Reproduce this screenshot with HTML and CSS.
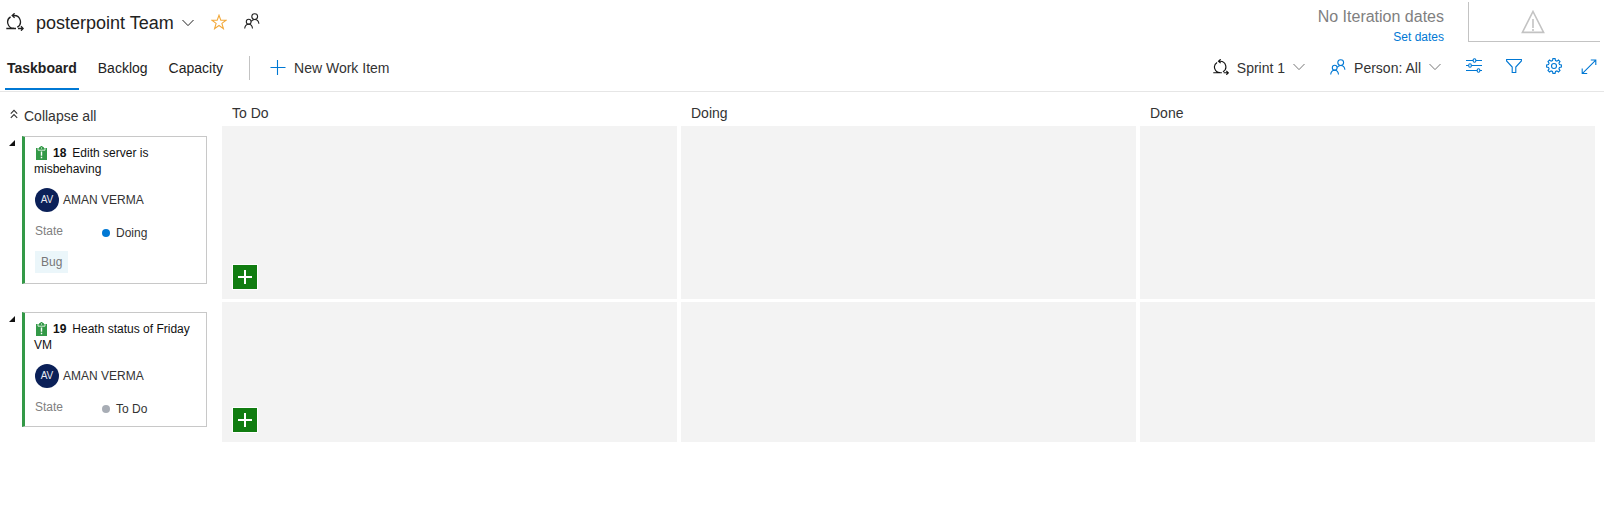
FILE: index.html
```html
<!DOCTYPE html>
<html lang="en">
<head>
<meta charset="utf-8">
<title>posterpoint Team - Taskboard</title>
<link rel="stylesheet" href="styles.css">
</head>
<body>
<svg class="defs" aria-hidden="true">
  <symbol id="sprint" viewBox="0 0 18 18"><path d="M0.3 15.5H10M8 15.2A6.1 6.1 0 0 1 4.6 3.9M6.4 2.5H8A6.3 6.3 0 0 1 11.2 14.3M12 15.5H17M8.6 0.3L6.2 2.5 8.6 4.7M15 13.3L17.2 15.5 15 17.7"/></symbol>
  <symbol id="people" viewBox="0 0 16 16"><circle cx="10.7" cy="3.6" r="2.9"/><circle cx="4.7" cy="8.7" r="2.4"/><path d="M0.7 15.5C0.9 12.8 2.6 11.2 4.7 11.2S8.3 12.8 8.5 15.5M7.2 8.4C8 7.2 9.2 6.5 10.7 6.5 13 6.5 14.7 8.2 14.9 10.8"/></symbol>
  <symbol id="chevron" viewBox="0 0 12 8"><path d="M0.5 1L6 6.6 11.5 1"/></symbol>
  <symbol id="clipboard" viewBox="0 0 11 14"><path fill="#339947" d="M0 2H3.2V1H4.5V0H6.5V1H7.8V2H11V14H0Z"/><path fill="none" stroke="#fff" stroke-width="0.8" d="M2 2V4.2H9V2"/><path fill="#fff" d="M4.8 5.5H6.2V9.8H4.8ZM4.8 10.8H6.2V12.2H4.8ZM5 1.4H6V2.4H5Z"/></symbol>
</svg>

<header class="page-header">
  <div class="team">
    <svg class="icon icon-sprint" aria-hidden="true"><use href="#sprint"/></svg>
    <button class="team-name" type="button">posterpoint Team <svg class="icon icon-chevron" aria-hidden="true"><use href="#chevron"/></svg></button>
    <button class="icon-button star" type="button" aria-label="Favorite"><svg class="icon icon-16" viewBox="0 0 16 16"><path d="M8 1.2L9.8 6.2H15.1L10.9 9.4 12.4 14.6 8 11.5 3.6 14.6 5.1 9.4 0.9 6.2H6.2Z"/></svg></button>
    <button class="icon-button members" type="button" aria-label="Team members"><svg class="icon icon-16"><use href="#people"/></svg></button>
  </div>
  <div class="iteration">
    <div class="dates">
      <span class="dates-label">No Iteration dates</span>
      <a class="dates-link" href="#dates">Set dates</a>
    </div>
    <div class="burndown">
      <svg class="icon icon-warning" viewBox="0 0 24 24" role="img" aria-label="Warning"><path d="M12 1.5L22.6 22.4H1.4Z"/><path d="M12 9V18M12 19V21"/></svg>
    </div>
  </div>
</header>

<div class="toolbar">
  <nav class="tabs">
    <a class="tab tab-active" href="#taskboard">Taskboard</a>
    <a class="tab" href="#backlog">Backlog</a>
    <a class="tab" href="#capacity">Capacity</a>
  </nav>
  <div class="new-item">
    <button class="command" type="button"><svg class="icon icon-16 blue" viewBox="0 0 16 16" aria-hidden="true"><path d="M0.5 7.5H15.5M7.5 0V15"/></svg>New Work Item</button>
  </div>
  <div class="tools">
    <button class="command" type="button"><svg class="icon icon-small-sprint" aria-hidden="true"><use href="#sprint"/></svg>Sprint 1<svg class="icon icon-chevron muted" aria-hidden="true"><use href="#chevron"/></svg></button>
    <button class="command" type="button"><svg class="icon icon-16 blue" aria-hidden="true"><use href="#people"/></svg>Person: All<svg class="icon icon-chevron muted" aria-hidden="true"><use href="#chevron"/></svg></button>
    <div class="actions">
      <button class="icon-button blue" type="button" aria-label="View options"><svg class="icon icon-16" viewBox="0 0 16 16"><path d="M0 2.5H7M10 2.5H16M0 7.5H2.5M5.5 7.5H16M0 12.5H11M14 12.5H16"/><rect x="7.2" y="0.7" width="2.6" height="3.6" rx="1.2"/><rect x="2.7" y="5.7" width="2.6" height="3.6" rx="1.2"/><rect x="11.2" y="10.7" width="2.6" height="3.6" rx="1.2"/></svg></button>
      <button class="icon-button blue" type="button" aria-label="Filter"><svg class="icon icon-16" viewBox="0 0 16 16"><path d="M0.6 1.5H15.4V3L9.8 9V14.5H6.2V9L0.6 3Z"/></svg></button>
      <button class="icon-button blue" type="button" aria-label="Settings"><svg class="icon icon-16" viewBox="0 0 16 16"><path d="M6.9 0.6H9.1L9.5 2.5 10.9 3.1 12.5 2 14 3.5 12.9 5.1 13.5 6.5 15.4 6.9V9.1L13.5 9.5 12.9 10.9 14 12.5 12.5 14 10.9 12.9 9.5 13.5 9.1 15.4H6.9L6.5 13.5 5.1 12.9 3.5 14 2 12.5 3.1 10.9 2.5 9.5 0.6 9.1V6.9L2.5 6.5 3.1 5.1 2 3.5 3.5 2 5.1 3.1 6.5 2.5Z"/><circle cx="8" cy="8" r="2.5"/></svg></button>
      <button class="icon-button blue expand" type="button" aria-label="Full screen"><svg class="icon icon-16" viewBox="0 0 16 16"><path d="M1.5 15.3L14.5 2.3M9.8 2H14.8V7M1.2 10.5V15.5H6.2"/></svg></button>
    </div>
  </div>
</div>

<main class="board">
  <button class="collapse" type="button"><svg class="icon icon-collapse" viewBox="0 0 8 10" aria-hidden="true"><path d="M0.8 4.6L4 1.4 7.2 4.6M0.8 8.8L4 5.6 7.2 8.8"/></svg>Collapse all</button>
  <h2 class="column-title">To Do</h2>
  <h2 class="column-title">Doing</h2>
  <h2 class="column-title">Done</h2>

  <section class="row-head">
    <button class="toggle" type="button" aria-label="Collapse row"><svg class="toggle-icon" viewBox="0 0 6 6"><path d="M6 0V6H0Z"/></svg></button>
    <article class="card">
      <h3 class="card-title"><svg class="card-icon" aria-hidden="true"><use href="#clipboard"/></svg><b class="card-id">18</b>Edith server is misbehaving</h3>
      <div class="assignee"><span class="avatar">AV</span>AMAN VERMA</div>
      <div class="state"><span class="state-label">State</span><span class="state-value"><i class="dot dot-doing"></i>Doing</span></div>
      <span class="tag">Bug</span>
    </article>
  </section>
  <div class="cell"><button class="add" type="button" aria-label="Add task"><svg class="add-icon" viewBox="0 0 14 14"><path d="M0 7H14M7 0V14"/></svg></button></div>
  <div class="cell"></div>
  <div class="cell"></div>

  <section class="row-head">
    <button class="toggle" type="button" aria-label="Collapse row"><svg class="toggle-icon" viewBox="0 0 6 6"><path d="M6 0V6H0Z"/></svg></button>
    <article class="card">
      <h3 class="card-title"><svg class="card-icon" aria-hidden="true"><use href="#clipboard"/></svg><b class="card-id">19</b>Heath status of Friday VM</h3>
      <div class="assignee"><span class="avatar">AV</span>AMAN VERMA</div>
      <div class="state"><span class="state-label">State</span><span class="state-value"><i class="dot dot-todo"></i>To Do</span></div>
    </article>
  </section>
  <div class="cell"><button class="add" type="button" aria-label="Add task"><svg class="add-icon" viewBox="0 0 14 14"><path d="M0 7H14M7 0V14"/></svg></button></div>
  <div class="cell"></div>
  <div class="cell"></div>
</main>
</body>
</html>
```

FILE: styles.css
```css
* { box-sizing: border-box; }

body {
  margin: 0 8px 0 0;
  background: #fff;
  color: #333;
  font: 14px/20px "Liberation Sans", Arial, sans-serif;
}

button {
  margin: 0;
  padding: 0;
  border: 0;
  background: none;
  color: inherit;
  font: inherit;
  cursor: pointer;
}

a { color: inherit; text-decoration: none; }
h2, h3 { margin: 0; font-weight: normal; }

.defs { display: none; }

.icon {
  flex: none;
  display: block;
  fill: none;
  stroke: currentColor;
  stroke-width: 1.1;
}
.icon-16 { width: 16px; height: 16px; }
.icon-sprint { width: 18px; height: 18px; stroke-width: 1.3; }
.icon-small-sprint { width: 16px; height: 16px; stroke-width: 1.3; color: #111; }
.icon-chevron { width: 12px; height: 8px; stroke-width: 1; }
.icon-warning { width: 24px; height: 24px; stroke-width: 1.6; }
.icon-collapse { width: 8px; height: 10px; }
.muted { color: #777; }
.blue { color: #0078d4; }

.page-header {
  display: flex;
  justify-content: space-between;
  height: 44px;
  padding: 2px 4px 2px 6px;
}

.team { display: flex; align-items: center; padding-top: 2px; color: #222; }
.team > .icon { margin-bottom: 2px; }
.team-name {
  display: flex;
  align-items: center;
  gap: 8px;
  margin-left: 12px;
  font-size: 18px;
  line-height: 24px;
}
.icon-button { display: flex; }
.star { margin-left: 17px; padding-bottom: 2px; color: #f2a93b; }
.members { margin-left: 17px; padding-bottom: 4px; }

.iteration { display: flex; gap: 24px; }
.dates { display: flex; flex-direction: column; align-items: flex-end; padding-top: 5px; }
.dates-label { color: #808080; font-size: 16px; }
.dates-link { color: #0078d4; font-size: 12px; }
.burndown {
  display: flex;
  justify-content: center;
  width: 132px;
  padding: 8px 4px 0 0;
  border: solid #c3c3c3;
  border-width: 0 0 1px 1px;
  color: #c3c3c3;
}

.toolbar {
  display: flex;
  height: 48px;
  padding: 0 7px 1px 5px;
  border-bottom: 1px solid #e6e6e6;
}

.tabs { display: flex; gap: 17px; }
.tab {
  padding: 14px 2px 10px;
  border-bottom: 2px solid transparent;
  color: #222;
}
.tab-active { border-color: #0078d4; font-weight: bold; }

.new-item {
  display: flex;
  align-self: center;
  height: 24px;
  margin: 2px 0 0 24px;
  padding-left: 20px;
  border-left: 1px solid #c3c3c3;
}
.command { display: flex; align-items: center; gap: 8px; }

.tools {
  display: flex;
  align-items: center;
  gap: 25px;
  margin-left: auto;
  padding-top: 2px;
}
.tools .command .icon { margin-bottom: 2px; }
.actions { display: flex; gap: 24px; padding-bottom: 4px; }
.expand { margin-left: -5px; }

.board {
  display: grid;
  grid-template-columns: 218px repeat(3, 1fr);
  grid-template-rows: 31px;
  gap: 3px 4px;
  padding-right: 9px;
}

.collapse {
  display: flex;
  align-items: center;
  gap: 6px;
  padding: 16px 0 0 10px;
}
.collapse .icon { margin-bottom: 3px; }
.column-title { padding: 11px 10px 0; font-size: 14px; }

.row-head { display: flex; align-items: flex-start; padding: 10px 11px 15px 9px; }
.toggle { display: flex; margin: 4px 7px 0 0; }
.toggle-icon { width: 6px; height: 6px; fill: #111; }

.card {
  flex: 1;
  padding: 8px 8px 9px 9px;
  border: 1px solid #c8c8c8;
  border-left: 3px solid #339947;
  font-size: 12px;
  line-height: 16px;
}
.card-title { color: #111; font-size: 12px; line-height: 16px; }
.card-icon {
  width: 11px;
  height: 14px;
  margin: 0 6px 0 2px;
  vertical-align: -3px;
}
.card-id { margin-right: 6px; font-size: 12px; }

.assignee { display: flex; align-items: center; gap: 4px; margin: 11px 0 13px 1px; }
.avatar {
  width: 24px;
  height: 24px;
  border-radius: 50%;
  background: #0b2058;
  color: #e8ebf2;
  font-size: 10px;
  line-height: 24px;
  text-align: center;
}

.state { display: grid; grid-template-columns: 67px 1fr; margin-left: 1px; }
.state-label { color: #808080; line-height: 13px; }
.state-value { display: flex; align-items: center; gap: 6px; }
.dot { width: 8px; height: 8px; border-radius: 50%; }
.dot-doing { background: #0078d4; }
.dot-todo { background: #a8adb5; }

.tag {
  display: block;
  width: fit-content;
  margin: 10px 0 1px 1px;
  padding: 3px 6px;
  background: #ebf6fa;
  color: #777;
}

.cell { display: flex; align-items: flex-end; padding: 9px 10px; background: #f3f3f3; }
.add {
  display: grid;
  place-items: center;
  width: 26px;
  height: 26px;
  border: 1px solid #fff;
  background: #107c10;
}
.add-icon { width: 14px; height: 14px; stroke: #fff; stroke-width: 2; }
```
